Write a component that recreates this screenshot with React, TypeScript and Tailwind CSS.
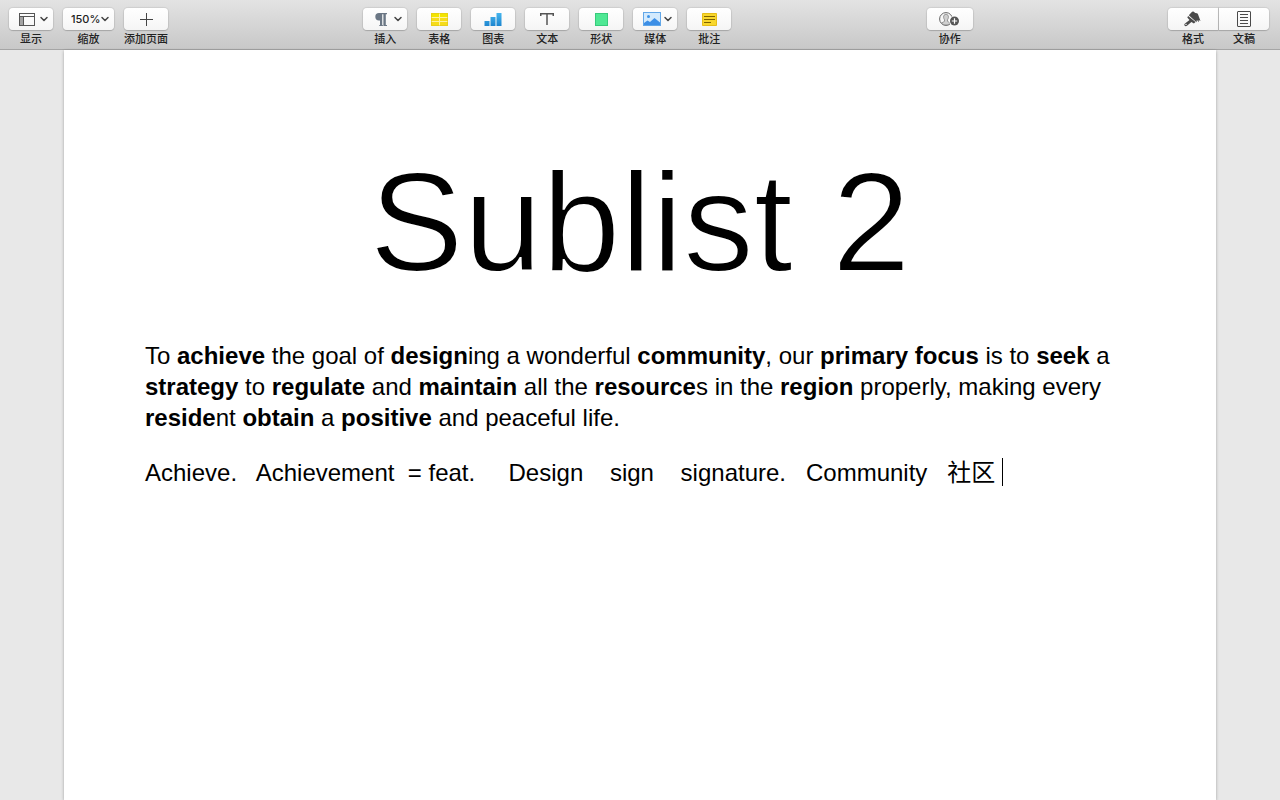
import type { ReactNode } from 'react';
import { ChevronDown } from 'lucide-react';

interface Tool {
  id: string;
  label: string;
  icon: ReactNode;
  menu?: boolean;
}

const ViewIcon = () => (
  <svg width="16" height="13" viewBox="0 0 16 13" fill="none" stroke="#555" aria-hidden="true">
    <rect x="0.5" y="0.5" width="15" height="12" />
    <path d="M0.5 3.5h15M4.5 3.5v9" />
    <path d="M1 4h3v8H1z" fill="#a3a3a3" stroke="none" />
  </svg>
);

const PlusIcon = () => (
  <svg width="13" height="13" viewBox="0 0 13 13" stroke="#444" aria-hidden="true">
    <path d="M6.5 0v13M0 6.5h13" />
  </svg>
);

const ParagraphIcon = () => (
  <svg width="14" height="13" viewBox="-2 0 14 13" fill="#6b7785" aria-hidden="true">
    <path d="M4 0h8v1.200h-1.200V12H12v1H8.400V1.200H7.200V12h.7v1H4.300v-1h.7V7.400H4A3.700 3.700 0 0 1 4 0z" />
  </svg>
);

const TableIcon = () => (
  <svg width="17" height="13" viewBox="0 0 17 13" aria-hidden="true">
    <path d="M0 0h17v13H0z" fill="#f6dc1a" />
    <path d="M0 0h17v4H0z" fill="#f3e500" />
    <path d="M0 4.500h17M0 8.500h17M8.500 0v13" stroke="#fff3a0" />
    <path d="M.5.5h16v12H.5z" fill="none" stroke="#e0c41c" strokeOpacity=".6" />
  </svg>
);

const ChartIcon = () => (
  <svg width="18" height="13" viewBox="0 0 18 13" aria-hidden="true">
    <defs>
      <linearGradient id="bars" x1="0" y1="0" x2="0" y2="1">
        <stop offset="0" stopColor="#46b6ee" />
        <stop offset="1" stopColor="#1d85cf" />
      </linearGradient>
    </defs>
    <path d="M.5 8h5v5h-5zM6.500 4h5v9h-5zM12.500 0h5v13h-5z" fill="url(#bars)" />
  </svg>
);

const TextIcon = () => (
  <svg width="14" height="12" viewBox="0 0 14 12" fill="none" stroke="#555" strokeWidth="1.500" aria-hidden="true">
    <path d="M.75 3V.75h12.500V3M7 .75V12" />
  </svg>
);

const ShapeIcon = () => (
  <svg width="13" height="13" viewBox="0 0 13 13" aria-hidden="true">
    <rect x="0.5" y="0.5" width="12" height="12" fill="#4fe894" stroke="#38ca7c" />
  </svg>
);

const MediaIcon = () => (
  <svg width="18" height="14" viewBox="0 0 18 14" aria-hidden="true">
    <rect x="0.5" y="0.5" width="17" height="13" fill="#d3eafd" stroke="#62a7e8" />
    <circle cx="5.500" cy="4.500" r="1.500" fill="#3d93e8" />
    <path d="M1 11 4.500 8.500l2.500 1.500L11.500 6 17 10.500V13H1z" fill="#3d8fe6" />
  </svg>
);

const CommentIcon = () => (
  <svg width="15" height="13" viewBox="0 0 15 13" aria-hidden="true">
    <path d="M.5.5h14v12H.5z" fill="#f8d72c" stroke="#e5bd17" />
    <path d="M2 3.500h11M2 6.500h11M2 9.500h7" stroke="#7d6200" />
  </svg>
);

const CollaborateIcon = () => (
  <svg width="21" height="15" viewBox="0 0 21 15" aria-hidden="true">
    <circle cx="7" cy="7" r="6.400" fill="#f7f7f7" stroke="#666" />
    <path
      d="M7 2.300c1.700 0 2.500 1.200 2.400 2.900-.1 1.300-.5 2-.9 2.600v1.500c.6.700 2 .9 3 1.700-2.500 2.700-6.500 2.700-9 0 1-.8 2.400-1 3-1.700V7.800c-.4-.6-.8-1.300-.9-2.600C4.500 3.500 5.300 2.300 7 2.300z"
      fill="#d0d0d0"
      stroke="#777"
      strokeWidth=".7"
    />
    <circle cx="15.500" cy="9" r="5.300" fill="#fff" />
    <circle cx="15.500" cy="9" r="4.500" fill="#555" />
    <path d="M15.500 6.300v5.400M12.800 9h5.400" stroke="#fff" strokeWidth="1.200" />
  </svg>
);

const BrushIcon = () => (
  <svg width="17" height="16" viewBox="0 0 17 16" fill="#4a4a4a" aria-hidden="true">
    <path d="M4.800 4.200 7.600 1.200c.5-.6 1.200-.9 1.800-.6L11.300 2l1.700.2c.6.100.9.600 1.100 1.200L16.500 10l-1.800-1 .2 2.200-2-2.300-.4 2.300z" />
    <path d="m4.100 5 7.400 6-1.600 1.500-2.500-1.600L3 14.700c-.8.700-1.900.6-2.400-.1-.5-.7-.3-1.600.4-2.200l4.500-3.300-2.200-2.600z" />
    <circle cx="2" cy="13.400" r=".7" fill="#fff" />
  </svg>
);

const DocumentIcon = () => (
  <svg width="14" height="16" viewBox="0 0 14 16" fill="none" stroke="#4a4a4a" aria-hidden="true">
    <rect x="0.5" y="0.5" width="13" height="15" rx="0.5" />
    <path d="M3 3.500h8M3 6.500h8M3 9.500h8M3 12.500h8" />
  </svg>
);

const insertTools: Tool[] = [
  { id: 'insert', label: '插入', icon: <ParagraphIcon />, menu: true },
  { id: 'table', label: '表格', icon: <TableIcon /> },
  { id: 'chart', label: '图表', icon: <ChartIcon /> },
  { id: 'text', label: '文本', icon: <TextIcon /> },
  { id: 'shape', label: '形状', icon: <ShapeIcon /> },
  { id: 'media', label: '媒体', icon: <MediaIcon />, menu: true },
  { id: 'comment', label: '批注', icon: <CommentIcon /> },
];

const ToolButton = ({ id, label, icon, menu }: Tool) => (
  <div className="flex min-w-11 flex-col items-center">
    <button
      id={id}
      type="button"
      className={`flex h-[22px] w-full items-center rounded bg-linear-to-b from-white to-[#f5f5f5] shadow-[0_0_1px_1px_#00000014,0_1px_1px_#00000026] ${
        menu ? 'justify-between pr-[3px] pl-2.5' : 'justify-center'
      }`}
    >
      {icon}
      {menu && <ChevronDown size={12} strokeWidth={3} className="text-[#444]" />}
    </button>
    <label htmlFor={id} className="whitespace-nowrap pt-px leading-4">
      {label}
    </label>
  </div>
);

function Toolbar() {
  return (
    <header className="flex h-[50px] shrink-0 justify-between border-b border-[#a5a5a5] bg-linear-to-b from-[#e3e3e3] to-[#c8c8c8] pt-2 pr-[11px] pl-[9px] text-[11px] font-medium text-[#222]">
      <div className="flex gap-2.5">
        <ToolButton id="view" label="显示" icon={<ViewIcon />} menu />
        <div className="flex w-[51px] flex-col items-center">
          <div className="relative w-full">
            <select
              id="zoom"
              defaultValue="150%"
              className="block h-[22px] w-full appearance-none rounded bg-linear-to-b from-white to-[#f5f5f5] pl-2 font-[Inter,sans-serif] text-[11px] shadow-[0_0_1px_1px_#00000014,0_1px_1px_#00000026]"
            >
              <option>100%</option>
              <option>150%</option>
              <option>200%</option>
            </select>
            <ChevronDown
              size={12}
              strokeWidth={3}
              className="pointer-events-none absolute top-[5px] right-[3px] text-[#444]"
            />
          </div>
          <label htmlFor="zoom" className="pt-px leading-4">
            缩放
          </label>
        </div>
        <ToolButton id="add-page" label="添加页面" icon={<PlusIcon />} />
      </div>

      <div className="flex gap-2.5">
        {insertTools.map((tool) => (
          <ToolButton key={tool.id} {...tool} />
        ))}
      </div>

      <div className="flex w-[46px] flex-col">
        <ToolButton id="collaborate" label="协作" icon={<CollaborateIcon />} />
      </div>

      {/* Inspector toggles */}
      <div className="grid grid-cols-2 gap-px">
        <div className="flex w-[50px] flex-col items-center">
          <button
            id="format"
            type="button"
            className="flex h-[22px] w-full items-center justify-center rounded-l bg-linear-to-b from-white to-[#f5f5f5] shadow-[0_0_1px_1px_#00000014,0_1px_1px_#00000026]"
          >
            <BrushIcon />
          </button>
          <label htmlFor="format" className="pt-px leading-4">
            格式
          </label>
        </div>
        <div className="flex w-[50px] flex-col items-center">
          <button
            id="document"
            type="button"
            className="flex h-[22px] w-full items-center justify-center rounded-r bg-linear-to-b from-white to-[#f5f5f5] shadow-[0_0_1px_1px_#00000014,0_1px_1px_#00000026]"
          >
            <DocumentIcon />
          </button>
          <label htmlFor="document" className="pt-px leading-4">
            文稿
          </label>
        </div>
      </div>
    </header>
  );
}

export default function App() {
  return (
    <div className="flex min-h-screen flex-col bg-[#e8e8e8] font-['Liberation_Sans','Noto_Sans_CJK_SC',sans-serif]">
      <Toolbar />
      <main className="mx-16 grow bg-white px-[81px] pt-[84px] text-black shadow-[0_1px_3px_#0000004d]">
        <h1 className="text-center text-[141px] leading-[176px] [-webkit-text-stroke:2px_white]">Sublist 2</h1>
        <p className="pt-[30px] text-[24px] leading-[31px]">
          To <b>achieve</b> the goal of <b>design</b>ing a wonderful <b>community</b>, our <b>primary focus</b> is to{' '}
          <b>seek</b> a <b>strategy</b> to <b>regulate</b> and <b>maintain</b> all the <b>resource</b>s in the{' '}
          <b>region</b> properly, making every <b>reside</b>nt <b>obtain</b> a <b>positive</b> and peaceful life.
        </p>
        <p className="pt-6 text-[24px] leading-[31px] whitespace-pre-wrap">
          {'Achieve.   Achievement  = feat.     Design    sign    signature.   Community   社区 '}
          <span className="inline-block h-7 w-px bg-black align-text-bottom" />
        </p>
      </main>
    </div>
  );
}
